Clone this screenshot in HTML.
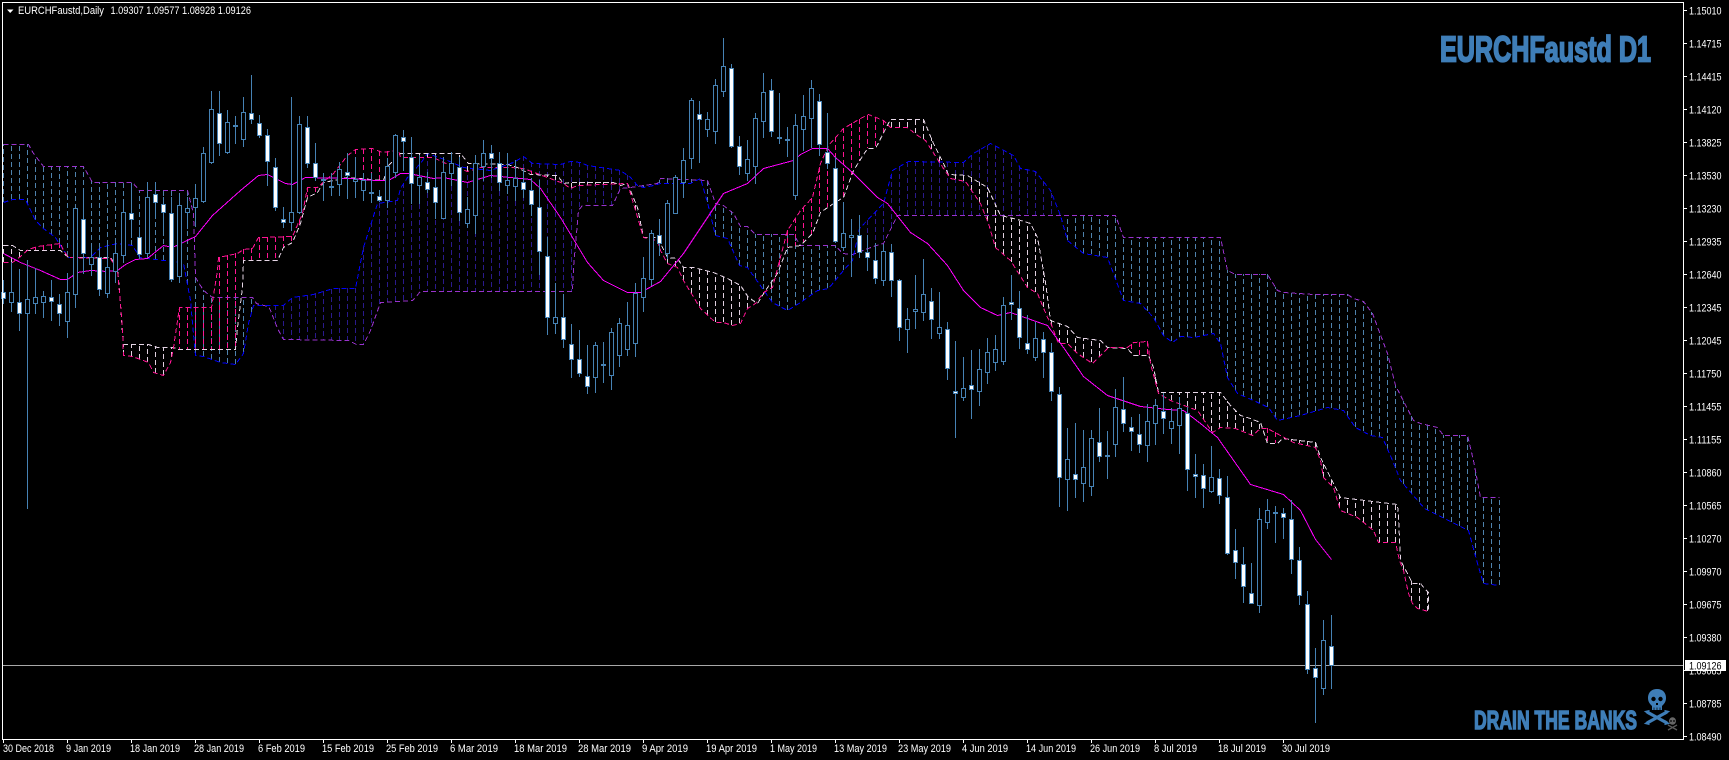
<!DOCTYPE html>
<html><head><meta charset="utf-8"><title>EURCHFaustd Daily</title>
<style>
html,body{margin:0;padding:0;background:#000;width:1729px;height:760px;overflow:hidden}
svg{display:block}
text{font-family:"Liberation Sans",sans-serif}
.l{font-size:11px;fill:#fff}
</style></head><body>
<svg id="s" xmlns="http://www.w3.org/2000/svg" width="1729" height="760" viewBox="0 0 1729 760">
<rect width="1729" height="760" fill="#000"/>
<g id="verts" shape-rendering="crispEdges" fill="none" stroke-dasharray="5 3"></g>
<g id="lines" shape-rendering="crispEdges" fill="none" stroke-dasharray="5 3"></g>
<polyline id="ma" shape-rendering="crispEdges" fill="none" stroke="#ff00ff"/>
<path d="M3 665.5H1683" stroke="#a8a8a8" shape-rendering="crispEdges"/>
<g id="cs" shape-rendering="crispEdges"></g>
<path d="M2.5 2V739.5M2 2.5H1684M1683.5 2V740M2 739.5H1684" stroke="#fff" fill="none" shape-rendering="crispEdges"/>
<g id="ticks" stroke="#fff" shape-rendering="crispEdges"></g>
<path d="M7 9.5H13.5L10.2 13Z" fill="#fff"/>
<text class="l" x="18" y="14" textLength="86" lengthAdjust="spacingAndGlyphs">EURCHFaustd,Daily</text>
<text class="l" x="110.500" y="14" textLength="140.500" lengthAdjust="spacingAndGlyphs">1.09307 1.09577 1.08928 1.09126</text>
<g class="yl">
<text class="l" x="1689" y="14.5" textLength="32.500" lengthAdjust="spacingAndGlyphs">1.15010</text>
<text class="l" x="1689" y="47.5" textLength="32.500" lengthAdjust="spacingAndGlyphs">1.14715</text>
<text class="l" x="1689" y="80.5" textLength="32.500" lengthAdjust="spacingAndGlyphs">1.14415</text>
<text class="l" x="1689" y="113.5" textLength="32.500" lengthAdjust="spacingAndGlyphs">1.14120</text>
<text class="l" x="1689" y="146.5" textLength="32.500" lengthAdjust="spacingAndGlyphs">1.13825</text>
<text class="l" x="1689" y="179.5" textLength="32.500" lengthAdjust="spacingAndGlyphs">1.13530</text>
<text class="l" x="1689" y="212.5" textLength="32.500" lengthAdjust="spacingAndGlyphs">1.13230</text>
<text class="l" x="1689" y="245.5" textLength="32.500" lengthAdjust="spacingAndGlyphs">1.12935</text>
<text class="l" x="1689" y="278.5" textLength="32.500" lengthAdjust="spacingAndGlyphs">1.12640</text>
<text class="l" x="1689" y="311.5" textLength="32.500" lengthAdjust="spacingAndGlyphs">1.12345</text>
<text class="l" x="1689" y="344.5" textLength="32.500" lengthAdjust="spacingAndGlyphs">1.12045</text>
<text class="l" x="1689" y="377.5" textLength="32.500" lengthAdjust="spacingAndGlyphs">1.11750</text>
<text class="l" x="1689" y="410.5" textLength="32.500" lengthAdjust="spacingAndGlyphs">1.11455</text>
<text class="l" x="1689" y="443.5" textLength="32.500" lengthAdjust="spacingAndGlyphs">1.11155</text>
<text class="l" x="1689" y="476.5" textLength="32.500" lengthAdjust="spacingAndGlyphs">1.10860</text>
<text class="l" x="1689" y="509.5" textLength="32.500" lengthAdjust="spacingAndGlyphs">1.10565</text>
<text class="l" x="1689" y="542.5" textLength="32.500" lengthAdjust="spacingAndGlyphs">1.10270</text>
<text class="l" x="1689" y="575.5" textLength="32.500" lengthAdjust="spacingAndGlyphs">1.09970</text>
<text class="l" x="1689" y="608.5" textLength="32.500" lengthAdjust="spacingAndGlyphs">1.09675</text>
<text class="l" x="1689" y="641.5" textLength="32.500" lengthAdjust="spacingAndGlyphs">1.09380</text>
<text class="l" x="1689" y="674.5" textLength="32.500" lengthAdjust="spacingAndGlyphs">1.09085</text>
<text class="l" x="1689" y="707.5" textLength="32.500" lengthAdjust="spacingAndGlyphs">1.08785</text>
<text class="l" x="1689" y="740.5" textLength="32.500" lengthAdjust="spacingAndGlyphs">1.08490</text>
</g>
<rect x="1685" y="660" width="41" height="11" fill="#fff"/>
<text x="1689" y="669.5" font-size="11" fill="#000" textLength="32.500" lengthAdjust="spacingAndGlyphs">1.09126</text>
<g class="xl">
<text class="l" x="3" y="752" textLength="51" lengthAdjust="spacingAndGlyphs">30 Dec 2018</text>
<text class="l" x="66" y="752" textLength="45" lengthAdjust="spacingAndGlyphs">9 Jan 2019</text>
<text class="l" x="130" y="752" textLength="50" lengthAdjust="spacingAndGlyphs">18 Jan 2019</text>
<text class="l" x="194" y="752" textLength="50" lengthAdjust="spacingAndGlyphs">28 Jan 2019</text>
<text class="l" x="258" y="752" textLength="47" lengthAdjust="spacingAndGlyphs">6 Feb 2019</text>
<text class="l" x="322" y="752" textLength="52" lengthAdjust="spacingAndGlyphs">15 Feb 2019</text>
<text class="l" x="386" y="752" textLength="52" lengthAdjust="spacingAndGlyphs">25 Feb 2019</text>
<text class="l" x="450" y="752" textLength="48" lengthAdjust="spacingAndGlyphs">6 Mar 2019</text>
<text class="l" x="514" y="752" textLength="53" lengthAdjust="spacingAndGlyphs">18 Mar 2019</text>
<text class="l" x="578" y="752" textLength="53" lengthAdjust="spacingAndGlyphs">28 Mar 2019</text>
<text class="l" x="642" y="752" textLength="46" lengthAdjust="spacingAndGlyphs">9 Apr 2019</text>
<text class="l" x="706" y="752" textLength="51" lengthAdjust="spacingAndGlyphs">19 Apr 2019</text>
<text class="l" x="770" y="752" textLength="47" lengthAdjust="spacingAndGlyphs">1 May 2019</text>
<text class="l" x="834" y="752" textLength="53" lengthAdjust="spacingAndGlyphs">13 May 2019</text>
<text class="l" x="898" y="752" textLength="53" lengthAdjust="spacingAndGlyphs">23 May 2019</text>
<text class="l" x="962" y="752" textLength="46" lengthAdjust="spacingAndGlyphs">4 Jun 2019</text>
<text class="l" x="1026" y="752" textLength="50" lengthAdjust="spacingAndGlyphs">14 Jun 2019</text>
<text class="l" x="1090" y="752" textLength="50" lengthAdjust="spacingAndGlyphs">26 Jun 2019</text>
<text class="l" x="1154" y="752" textLength="43" lengthAdjust="spacingAndGlyphs">8 Jul 2019</text>
<text class="l" x="1218" y="752" textLength="48" lengthAdjust="spacingAndGlyphs">18 Jul 2019</text>
<text class="l" x="1282" y="752" textLength="48" lengthAdjust="spacingAndGlyphs">30 Jul 2019</text>
</g>
<text x="1440" y="61.500" font-size="36" font-weight="700" fill="#3f7eb8" stroke="#3f7eb8" stroke-width="1.8" textLength="211" lengthAdjust="spacingAndGlyphs">EURCHFaustd D1</text>
<text x="1474" y="729" font-size="26" font-weight="700" fill="#3f7eb8" stroke="#3f7eb8" stroke-width="1.4" textLength="163" lengthAdjust="spacingAndGlyphs">DRAIN THE BANKS</text>
<g>
<path d="M1657 689C1651 689 1648 693 1648 698C1648 702 1650 704 1652 706V710H1662V706C1664 704 1666 702 1666 698C1666 693 1663 689 1657 689Z" fill="#3f7eb8"/>
<circle cx="1653.500" cy="699" r="2.200" fill="#000"/><circle cx="1660.500" cy="699" r="2.200" fill="#000"/>
<path d="M1656 703H1658V705H1656Z" fill="#000"/>
<path d="M1654 707.500V710M1657 707.500V710M1660 707.500V710" stroke="#000" stroke-width=".7"/>
<path d="M1647 712L1667 723M1667 712L1647 723" stroke="#3f7eb8" stroke-width="3.200" fill="none"/>
<path d="M1645 711.500L1649 710.500L1648.500 714ZM1669 711.500L1665 710.500L1665.500 714ZM1645 723.500L1649 724.500L1648.500 721ZM1669 723.500L1665 724.500L1665.500 721Z" fill="#3f7eb8" stroke="#3f7eb8"/>
<ellipse cx="1672.500" cy="721" rx="3.500" ry="3.800" fill="#666"/>
<circle cx="1671" cy="721" r=".9" fill="#000"/><circle cx="1674" cy="721" r=".9" fill="#000"/>
<path d="M1668 725L1677 730M1677 725L1668 730" stroke="#5a5a5a" stroke-width="1.300"/>
</g>
</svg>
<script>
(function(){
var NS='http://www.w3.org/2000/svg';
function el(n,a,p){var e=document.createElementNS(NS,n);for(var k in a)e.setAttribute(k,a[k]);p.appendChild(e);return e;}
var C=[[280,292,298,303,1],[262,292,302,311,0],[269,302,313,330,1],[260,299,313,508,0],[268,297,303,313,0],[291,296,302,317,0],[280,297,301,320,1],[294,304,313,325,1],[273,292,321,337,0],[208,208,294,307,0],[189,219,253,273,1],[247,257,264,275,0],[248,257,289,295,1],[242,267,293,297,0],[242,253,271,282,0],[200,212,255,262,0],[183,213,219,237,1],[227,237,254,258,1],[182,197,253,257,0],[182,194,202,217,1],[197,204,212,230,1],[197,213,279,281,1],[195,205,276,282,0],[197,208,212,228,0],[184,198,207,226,0],[147,153,201,202,0],[91,109,162,163,0],[91,113,143,155,1],[110,122,152,153,0],[116,125,126,143,0],[97,112,139,146,0],[75,113,119,123,1],[115,123,135,137,1],[129,135,161,185,1],[158,167,207,210,1],[207,219,222,227,1],[97,212,222,230,0],[116,124,212,213,0],[116,127,163,167,1],[143,163,177,180,1],[173,179,180,200,0],[173,186,187,195,1],[162,169,184,195,0],[153,172,175,198,1],[157,179,181,197,0],[173,180,190,200,0],[173,192,193,202,0],[190,196,200,201,1],[158,166,200,207,0],[134,135,172,177,0],[130,137,141,170,1],[137,157,183,203,1],[155,177,185,203,0],[172,182,189,192,1],[155,187,202,218,1],[157,172,218,218,0],[152,163,173,185,0],[157,167,212,220,1],[197,209,223,227,0],[155,163,215,233,0],[140,153,166,180,0],[145,153,158,177,1],[152,163,182,190,1],[153,180,185,193,0],[160,178,186,200,0],[168,182,189,197,1],[178,190,204,215,1],[180,207,251,274,1],[237,256,317,334,1],[283,317,323,333,0],[294,317,339,347,1],[324,344,359,377,1],[330,359,373,376,1],[345,376,386,393,1],[342,345,377,392,0],[342,364,365,382,0],[328,332,375,389,0],[318,323,355,366,0],[302,325,349,355,0],[283,293,343,356,0],[257,278,297,311,0],[230,233,279,285,0],[219,235,243,255,1],[200,203,253,258,0],[175,177,213,213,0],[148,160,182,197,0],[98,100,158,168,0],[101,114,119,162,1],[112,119,129,136,0],[79,85,131,143,0],[38,66,91,96,0],[64,68,146,147,1],[136,146,166,174,1],[140,159,173,180,0],[113,118,166,183,0],[73,92,121,137,0],[79,90,131,136,1],[93,137,138,143,0],[127,139,140,156,0],[114,125,195,199,0],[95,116,129,150,0],[80,88,118,147,0],[94,101,144,155,1],[113,152,163,168,1],[157,168,241,242,1],[202,233,247,250,0],[219,235,237,276,0],[215,235,252,257,1],[235,252,257,270,1],[243,260,278,283,1],[244,251,280,285,0],[244,252,280,296,1],[279,280,327,340,1],[308,319,329,352,0],[275,309,311,328,0],[259,294,312,320,0],[288,301,319,338,1],[292,327,333,338,0],[322,329,368,379,1],[341,391,393,437,1],[357,388,397,400,0],[350,385,389,418,1],[349,369,391,405,0],[338,352,372,383,0],[335,349,362,370,0],[297,305,361,364,0],[275,302,304,319,1],[291,308,337,348,1],[315,343,349,353,1],[322,338,357,360,0],[332,339,352,377,1],[343,352,391,400,1],[387,394,477,506,1],[428,459,479,510,0],[423,474,479,497,1],[430,467,483,501,0],[430,438,486,495,0],[408,442,456,461,1],[431,455,456,478,0],[389,407,444,456,0],[377,409,423,431,1],[417,427,431,450,1],[414,434,444,452,1],[404,421,445,461,0],[399,405,423,444,0],[393,411,418,433,1],[408,421,428,443,0],[397,408,425,453,0],[407,413,469,490,1],[454,474,476,497,1],[464,475,488,507,1],[446,477,491,492,0],[469,478,495,503,1],[476,497,553,554,1],[529,550,562,578,1],[547,564,586,602,1],[563,593,603,603,1],[508,519,605,612,0],[499,510,522,528,0],[506,512,513,542,0],[508,513,517,538,1],[500,519,559,573,1],[547,560,595,604,1],[591,604,669,673,1],[648,668,677,722,1],[620,640,688,694,0],[615,646,665,688,1]];
var V=[[3,144],[28,144],[33,153],[43,166],[83,166],[92,182],[132,182],[139,190],[187,190],[193,213],[195,277],[203,290],[212,297],[252,297],[256,303],[259,304],[268,306],[270,310],[277,328],[283,339],[348,340],[356,344],[363,344],[370,330],[380,302],[397,301],[412,300],[420,291],[572,291],[573,267],[578,210],[582,205],[612,205],[620,188],[630,187],[657,183],[660,178],[707,180],[715,203],[723,205],[733,213],[740,226],[747,226],[755,234],[793,234],[800,245],[835,245],[842,253],[852,254],[873,246],[883,243],[897,215],[1115,215],[1123,237],[1220,237],[1227,270],[1235,274],[1267,274],[1277,290],[1283,292],[1313,294],[1347,294],[1353,298],[1363,301],[1372,313],[1387,353],[1395,385],[1413,420],[1420,423],[1437,427],[1443,435],[1467,435],[1473,460],[1480,497],[1499,497]];
var B=[[3,202],[12,199],[25,199],[35,220],[43,228],[55,237],[60,245],[68,257],[90,257],[100,247],[117,243],[132,245],[137,253],[139,257],[163,260],[170,260],[183,263],[190,300],[192,323],[195,355],[203,356],[220,362],[235,364],[243,353],[248,323],[253,305],[283,305],[292,297],[313,294],[333,288],[355,288],[363,247],[377,203],[397,200],[400,188],[407,177],[420,163],[427,153],[447,160],[463,167],[490,170],[513,162],[523,156],[532,163],[560,164],[570,161],[580,162],[587,165],[620,170],[630,177],[637,185],[643,187],[653,185],[660,183],[690,183],[700,178],[707,202],[715,235],[727,238],[739,265],[747,267],[772,302],[787,310],[800,302],[817,290],[828,288],[843,270],[852,260],[859,228],[883,203],[892,170],[908,161],[963,162],[973,153],[990,143],[1013,155],[1020,168],[1035,171],[1050,190],[1060,215],[1067,240],[1083,253],[1107,257],[1123,300],[1140,303],[1153,317],[1163,335],[1172,342],[1180,336],[1193,337],[1213,333],[1220,343],[1227,377],[1237,393],[1253,400],[1268,407],[1277,420],[1300,415],[1327,407],[1343,410],[1355,427],[1370,435],[1382,437],[1392,460],[1400,480],[1424,508],[1468,530],[1477,563],[1483,583],[1499,585]];
var W=[[3,245],[12,245],[20,250],[60,250],[68,257],[110,257],[117,267],[120,303],[122,333],[123,344],[148,344],[157,347],[173,347],[178,349],[235,349],[237,327],[242,287],[243,260],[277,260],[283,247],[292,242],[300,223],[307,197],[317,192],[323,182],[333,180],[347,177],[383,180],[388,165],[400,153],[460,153],[468,163],[507,164],[517,167],[530,174],[557,175],[563,183],[570,182],[613,182],[620,185],[627,183],[637,207],[643,237],[657,237],[667,257],[677,258],[683,267],[693,267],[713,272],[727,278],[740,285],[748,297],[757,303],[765,290],[777,273],[787,247],[800,245],[812,233],[820,212],[833,203],[843,197],[853,170],[867,148],[875,148],[890,119],[923,119],[933,143],[943,163],[948,174],[967,175],[987,187],[1000,215],[1017,219],[1030,223],[1037,237],[1045,282],[1050,320],[1067,326],[1077,337],[1100,340],[1107,347],[1127,348],[1133,355],[1148,355],[1153,367],[1158,392],[1220,392],[1230,405],[1240,415],[1247,417],[1260,422],[1267,443],[1277,443],[1282,438],[1315,442],[1320,457],[1328,473],[1340,497],[1397,504],[1398,517],[1400,560],[1407,573],[1412,583],[1420,583],[1424,588],[1428,592],[1428,610]];
var P=[[3,262],[12,262],[20,256],[28,249],[37,246],[60,243],[63,250],[68,257],[110,258],[117,270],[120,303],[122,330],[123,355],[132,356],[140,359],[148,362],[153,372],[163,375],[170,362],[173,347],[179,307],[211,307],[217,270],[218,257],[237,253],[243,249],[252,248],[258,237],[292,236],[302,213],[307,187],[317,187],[333,173],[347,155],[355,149],[372,148],[382,152],[398,150],[400,157],[433,157],[443,162],[467,171],[480,167],[510,167],[523,168],[563,183],[570,188],[577,185],[627,183],[633,203],[643,237],[657,240],[660,250],[667,263],[677,267],[683,280],[700,308],[715,322],[723,322],[732,325],[740,323],[747,308],[755,303],[763,292],[772,287],[787,230],[800,210],[812,197],[820,163],[828,145],[843,128],[860,118],[868,114],[883,120],[890,127],[907,127],[917,135],[925,140],[943,168],[950,178],[965,181],[980,203],[988,223],[995,247],[1010,260],[1027,287],[1037,293],[1047,317],[1050,322],[1058,343],[1067,343],[1077,353],[1092,363],[1100,355],[1108,347],[1127,347],[1133,342],[1147,341],[1150,363],[1158,393],[1170,400],[1197,410],[1212,432],[1220,427],[1235,428],[1252,435],[1260,428],[1267,428],[1280,435],[1293,442],[1315,447],[1320,460],[1323,477],[1333,487],[1340,510],[1357,517],[1373,530],[1378,542],[1395,542],[1399,560],[1403,570],[1408,593],[1412,603],[1417,608],[1428,611]];
var M=[[3,253],[20,262],[40,270],[60,279],[67,279],[77,272],[90,270],[107,271],[117,270],[125,264],[135,259],[147,258],[163,245],[172,247],[195,236],[212,215],[240,190],[258,175],[267,174],[285,183],[292,184],[305,177],[350,178],[375,180],[388,180],[400,173],[408,173],[433,178],[443,177],[467,182],[490,175],[530,179],[540,188],[560,217],[587,262],[603,280],[627,292],[640,292],[660,281],[683,253],[723,193],[747,183],[763,168],[793,160],[800,154],[812,148],[827,148],[835,157],[853,173],[877,197],[887,203],[910,232],[927,243],[947,265],[963,290],[980,307],[997,315],[1010,312],[1030,319],[1047,325],[1063,347],[1083,376],[1107,395],[1140,406],[1167,409],[1183,410],[1200,423],[1217,437],[1250,484],[1283,494],[1300,510],[1315,539],[1331,559]];
function at(L,x){for(var i=1;i<L.length;i++){if(x<=L[i][0]){var a=L[i-1],b=L[i];if(b[0]===a[0])return b[1];return a[1]+(b[1]-a[1])*(x-a[0])/(b[0]-a[0]);}}return L[L.length-1][1];}
function pts(L){return L.map(function(p){return (p[0]+.5)+','+(p[1]+.5)}).join(' ');}
var vg=document.getElementById('verts'),lg=document.getElementById('lines');
function vert(A,Bt,maxX,colTop,colBot){
 var paths={},k,x;
 for(k=0;(x=3+8*k)<=maxX;k++){
  var a=Math.round(at(A,x)),b=Math.round(at(Bt,x));
  if(Math.abs(a-b)<2)continue;
  var c=a<b?colTop:colBot;
  paths[c]=(paths[c]||'')+'M'+(x+.5)+' '+b+'V'+a;
 }
 for(var c2 in paths)el('path',{d:paths[c2],stroke:c2},vg);
}
vert(V,B,1499,'#4f82ad','#2a1a8c');
vert(W,P,1428,'#e0d0e0','#ff1493');
el('polyline',{points:pts(V),stroke:'#9932cc'},lg);
el('polyline',{points:pts(B),stroke:'#0000ff'},lg);
el('polyline',{points:pts(W),stroke:'#e6d6e6'},lg);
el('polyline',{points:pts(P),stroke:'#ff1493'},lg);
document.getElementById('ma').setAttribute('points',pts(M));
var cg=document.getElementById('cs'),w='';
C.forEach(function(c,i){var x=3+8*i;w+='M'+(x+.5)+' '+c[0]+'V'+(c[3]+1);});
el('path',{d:w,stroke:'#4682b4',fill:'none'},cg);
C.forEach(function(c,i){var x=3+8*i;el('rect',{x:x-1.5,y:c[1]+.5,width:4,height:Math.max(c[2]-c[1],1),fill:c[4]?'#fff':'#000',stroke:'#4682b4'},cg);});
var t='',i,tg=document.getElementById('ticks');
for(i=0;i<23;i++)t+='M1684 '+(10.5+33*i)+'H1687';
for(i=0;i<21;i++)t+='M'+(3.5+64*i)+' 740V743';
el('path',{d:t},tg);
})();
</script>
</body></html>
